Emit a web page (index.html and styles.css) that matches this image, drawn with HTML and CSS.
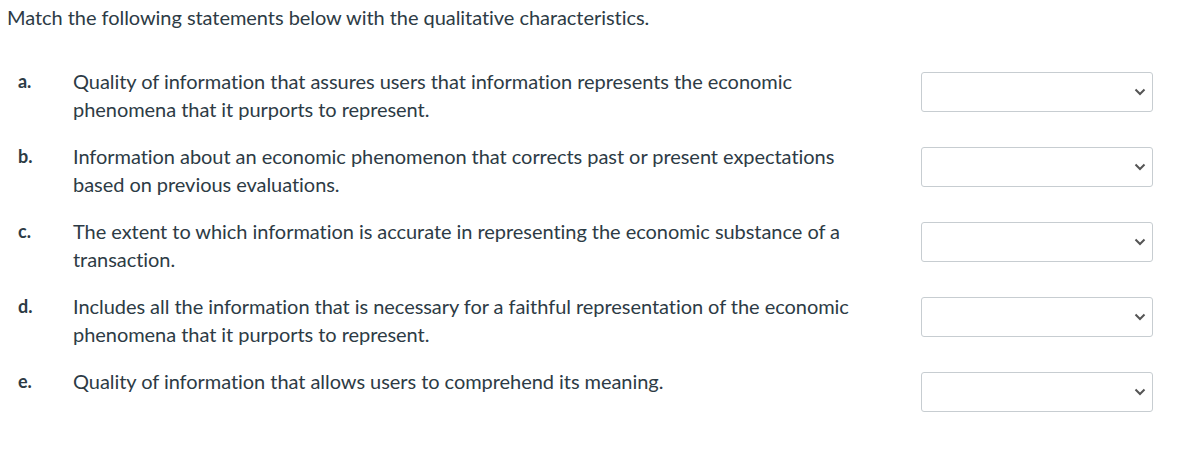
FILE: index.html
```html
<!DOCTYPE html>
<html>
<head>
<meta charset="utf-8">
<link rel="stylesheet" href="styles.css">
</head>
<body>
<div class="page">
  <p class="prompt">Match the following statements below with the qualitative characteristics.</p>
  <div class="rows">
    <div class="row">
      <div class="label">a.</div>
      <div class="text">Quality of information that assures users that information represents the economic phenomena that it purports to represent.</div>
      <div class="select"><svg width="12" height="8" viewBox="0 0 12 8"><path d="M1.5 1.5 L6 6 L10.5 1.5" fill="none" stroke="#555" stroke-width="2"/></svg></div>
    </div>
    <div class="row">
      <div class="label">b.</div>
      <div class="text">Information about an economic phenomenon that corrects past or present expectations based on previous evaluations.</div>
      <div class="select"><svg width="12" height="8" viewBox="0 0 12 8"><path d="M1.5 1.5 L6 6 L10.5 1.5" fill="none" stroke="#555" stroke-width="2"/></svg></div>
    </div>
    <div class="row">
      <div class="label">c.</div>
      <div class="text">The extent to which information is accurate in representing the economic substance of a transaction.</div>
      <div class="select"><svg width="12" height="8" viewBox="0 0 12 8"><path d="M1.5 1.5 L6 6 L10.5 1.5" fill="none" stroke="#555" stroke-width="2"/></svg></div>
    </div>
    <div class="row">
      <div class="label">d.</div>
      <div class="text">Includes all the information that is necessary for a faithful representation of the economic phenomena that it purports to represent.</div>
      <div class="select"><svg width="12" height="8" viewBox="0 0 12 8"><path d="M1.5 1.5 L6 6 L10.5 1.5" fill="none" stroke="#555" stroke-width="2"/></svg></div>
    </div>
    <div class="row">
      <div class="label">e.</div>
      <div class="text">Quality of information that allows users to comprehend its meaning.</div>
      <div class="select"><svg width="12" height="8" viewBox="0 0 12 8"><path d="M1.5 1.5 L6 6 L10.5 1.5" fill="none" stroke="#555" stroke-width="2"/></svg></div>
    </div>
  </div>
</div>
</body>
</html>
```
FILE: styles.css
```css
html, body {
  margin: 0;
  padding: 0;
  background: #fff;
}
.page {
  font-family: Lato, "Liberation Sans", sans-serif;
  font-size: 20px;
  line-height: 28px;
  letter-spacing: -0.05px;
  color: #2d3b45;
  padding: 3px 28px 0 7px;
}
.prompt {
  margin: 0;
}
.rows {
  display: flex;
  flex-direction: column;
  gap: 19px;
  margin-top: 36px;
  padding-left: 11px;
}
.row {
  display: grid;
  grid-template-columns: 55px 1fr 232px;
  align-items: start;
  min-height: 56px;
}
.label {
  font-weight: 700;
  font-size: 18px;
}
.text {
  max-width: 792px;
}
.select {
  margin-top: 5px;
  height: 40px;
  box-sizing: border-box;
  border: 1px solid #c7cdd1;
  border-radius: 3px;
  background: #fff;
  display: flex;
  align-items: center;
  justify-content: flex-end;
  padding-right: 6px;
}
.select svg {
  display: block;
}
```
